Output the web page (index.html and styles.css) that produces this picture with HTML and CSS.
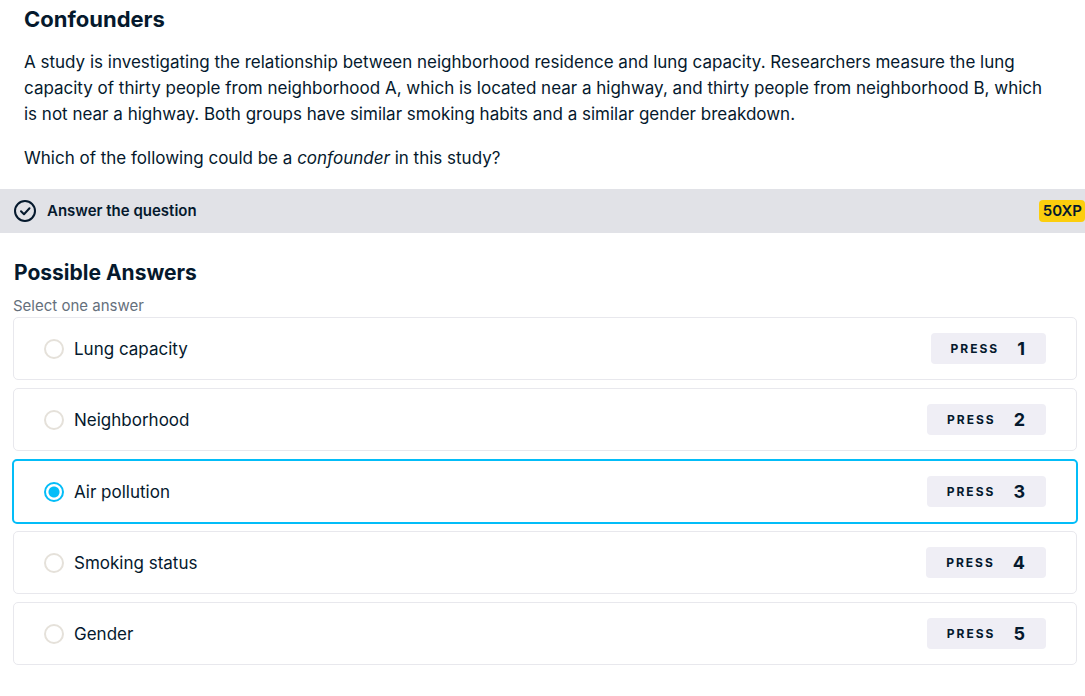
FILE: index.html
```html
<!DOCTYPE html>
<html lang="en">
<head>
<meta charset="utf-8">
<meta name="viewport" content="width=device-width, initial-scale=1">
<title>Confounders</title>
<link rel="stylesheet" href="styles.css">
</head>
<body>
<main>
  <section class="intro">
    <h1 class="title">Confounders</h1>
    <p class="text">A study is investigating the relationship between neighborhood residence and lung capacity. Researchers measure the lung capacity of thirty people from neighborhood A, which is located near a highway, and thirty people from neighborhood B, which is not near a highway. Both groups have similar smoking habits and a similar gender breakdown.</p>
    <p class="text">Which of the following could be a <em>confounder</em> in this study?</p>
  </section>
  <div class="bar">
    <svg class="bar-icon" viewBox="0 0 22 22" aria-hidden="true">
      <circle cx="11" cy="11" r="10"/>
      <path d="M7 11.200l3 3L15.500 8.300"/>
    </svg>
    <h2 class="bar-title">Answer the question</h2>
    <span class="xp">50XP</span>
  </div>
  <form class="answers">
    <h2 class="answers-title">Possible Answers</h2>
    <p class="hint">Select one answer</p>
    <div class="options">
      <label class="option"><input class="radio" type="radio" name="answer"><span class="name">Lung capacity</span><kbd class="key">PRESS<span class="digit">1</span></kbd></label>
      <label class="option"><input class="radio" type="radio" name="answer"><span class="name">Neighborhood</span><kbd class="key">PRESS<span class="digit">2</span></kbd></label>
      <label class="option selected"><input class="radio" type="radio" name="answer" checked><span class="name">Air pollution</span><kbd class="key">PRESS<span class="digit">3</span></kbd></label>
      <label class="option"><input class="radio" type="radio" name="answer"><span class="name">Smoking status</span><kbd class="key">PRESS<span class="digit">4</span></kbd></label>
      <label class="option"><input class="radio" type="radio" name="answer"><span class="name">Gender</span><kbd class="key">PRESS<span class="digit">5</span></kbd></label>
    </div>
  </form>
</main>
</body>
</html>
```
FILE: styles.css
```css
* { box-sizing: border-box; }
body {
  margin: 0;
  background: #fff;
  color: #05192d;
  font-family: Inter, "Liberation Sans", sans-serif;
}
h1, h2, p { margin: 0; }
.intro { padding: 4px 32px 18px 24px; }
.title { font-size: 22px; line-height: 30px; font-weight: 700; }
.text { margin-top: 15px; font-size: 17px; line-height: 26px; }
.text + .text { margin-top: 18px; }
.bar {
  display: flex;
  align-items: center;
  height: 44px;
  padding-left: 14px;
  background: #e1e2e7;
}
.bar-icon {
  width: 22px;
  height: 22px;
  fill: none;
  stroke: #05192d;
  stroke-width: 2;
  stroke-linecap: round;
  stroke-linejoin: round;
}
.bar-title { margin-left: 11px; font-size: 15px; line-height: 22px; font-weight: 600; }
.xp {
  margin-left: auto;
  padding: 0 3px 0 4px;
  border-radius: 4px;
  background: #fcce0d;
  font-size: 15px;
  line-height: 22px;
  font-weight: 600;
}
.answers { padding: 24px 8px 24px 13px; }
.answers-title { padding-left: 1px; font-size: 21px; line-height: 32px; font-weight: 700; }
.hint { padding-top: 6px; color: #65707c; font-size: 15px; line-height: 22px; }
.options { display: flex; flex-direction: column; gap: 8px; }
.option {
  display: flex;
  align-items: center;
  padding: 15px 30px;
  border: 1px solid #e8e8ed;
  border-radius: 5px;
}
.selected { margin: 0 -1px -1px; border: 2px solid #03bdf8; }
.radio {
  appearance: none;
  width: 20px;
  height: 20px;
  margin: 0 10px 0 0;
  border: 2px solid #e5e1da;
  border-radius: 50%;
  background: #fff;
}
.radio:checked {
  border-color: #03bdf8;
  background: radial-gradient(circle, #03bdf8 5px, #fff 6px);
}
.name { flex: 1; font-size: 17px; line-height: 24px; }
.key {
  display: flex;
  align-items: center;
  height: 31px;
  padding: 0 21px 0 20px;
  border-radius: 4px;
  background: #efeef5;
  font-family: inherit;
  font-size: 12px;
  font-weight: 700;
  letter-spacing: 2px;
}
.digit { margin-left: 18px; font-size: 18px; letter-spacing: 0; }
```
